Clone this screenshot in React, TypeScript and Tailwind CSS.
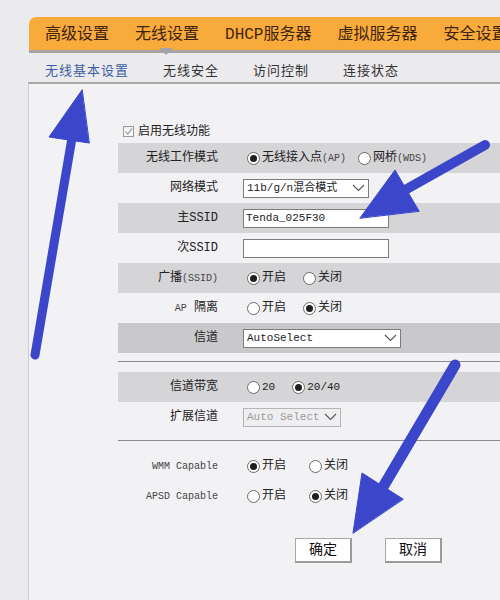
import { ReactNode } from "react";

const navItems = ["高级设置", "无线设置", "DHCP服务器", "虚拟服务器", "安全设置"];
const tabs = ["无线基本设置", "无线安全", "访问控制", "连接状态"];

const Radio = ({ checked, children }: { checked?: boolean; children: ReactNode }) => {
  return (
    <label className="flex items-center gap-[2px]">
      <span className="flex items-center justify-center w-[13px] h-[13px] rounded-full border border-[#6b6b6b] bg-white">
        {checked && <span className="w-[7px] h-[7px] rounded-full bg-[#1f1f1f]" />}
      </span>
      <span>{children}</span>
    </label>
  );
};

const Chevron = () => (
  <svg className="w-[13px] h-[8px]" viewBox="0 0 13 8" fill="none" stroke="#555" strokeWidth="1.1">
    <path d="M1 1 L6.5 6.5 L12 1" />
  </svg>
);

const Select = ({ value, width, disabled }: { value: string; width: string; disabled?: boolean }) => (
  <div
    className={`flex items-center justify-between h-[19px] px-[3px] text-[11px] border ${width} ${
      disabled ? "bg-[#efeef1] border-[#b5b5b5] text-[#9a9a9a]" : "bg-white border-[#7c7c7c] text-[#222]"
    }`}
  >
    <span>{value}</span>
    <Chevron />
  </div>
);

const Row = ({ label, bg, children }: { label: ReactNode; bg?: string; children: ReactNode }) => (
  <div className={`flex items-center h-[30px] ${bg ?? ""}`}>
    <div className="w-[100px] text-right text-[12px] text-[#222]">{label}</div>
    <div className="flex items-center pl-[25px]">{children}</div>
  </div>
);

const Small = ({ children }: { children: ReactNode }) => (
  <span className="text-[10px] text-[#444]">{children}</span>
);

const App = () => {
  return (
    <div className="relative w-[500px] h-[600px] overflow-hidden bg-[#ebeaed] pt-[17px] font-['Liberation_Mono','Noto_Sans_CJK_SC',monospace] text-[#222]">
      {/* top nav */}
      <div className="ml-[29px] h-[36px] bg-[#f8aa3a] rounded-tl-[7px] border-b-[3px] border-[#a4a4a4] flex items-center pt-[3px] pl-[16px] gap-[26px] text-[16px] text-[#3d2410] whitespace-nowrap">
        {navItems.map((item, i) => (
          <span key={item} className="relative leading-none">
            {item}
            {i === 1 && (
              <span className="absolute left-[24px] top-[21px] w-0 h-0 border-l-[7px] border-r-[7px] border-t-[7px] border-l-transparent border-r-transparent border-t-[#a4a4a4]" />
            )}
          </span>
        ))}
      </div>

      {/* sub tabs */}
      <div className="h-[29px] pt-[8px] pl-[45px] flex items-center gap-[34px] text-[13px] tracking-[1px] text-[#333]">
        {tabs.map((t, i) => (
          <span key={t} className={i === 0 ? "text-[#3d5ea6]" : ""}>
            {t}
          </span>
        ))}
      </div>

      {/* panel */}
      <div className="ml-[28px] h-[520px] bg-[#f2f1f4] border-t-2 border-l border-t-[#a9a9a9] border-l-[#cfcfcf] pt-[34px] pl-[89px]">
        <div className="flex items-center h-[25px] pl-[5px] gap-[4px] text-[12px] pt-[2px]">
          <span className="flex items-center justify-center w-[11px] h-[11px] border border-[#9a9a9a] bg-[#f7f7f7]">
            <svg className="w-[9px] h-[9px]" viewBox="0 0 9 9" fill="none" stroke="#8a8a8a" strokeWidth="1.1">
              <path d="M1.5 4.5 L3.8 7 L8 1.5" />
            </svg>
          </span>
          <span>启用无线功能</span>
        </div>

        <Row label="无线工作模式" bg="bg-[#d5d4d7]">
          <div className="flex items-center gap-[12px] text-[12px] ml-[4px]">
            <Radio checked>
              无线接入点<Small>(AP)</Small>
            </Radio>
            <Radio>
              网桥<Small>(WDS)</Small>
            </Radio>
          </div>
        </Row>
        <Row label="网络模式">
          <Select value="11b/g/n混合模式" width="w-[126px]" />
        </Row>
        <Row label="主SSID" bg="bg-[#d5d4d7]">
          <div className="w-[146px] h-[19px] bg-white border border-[#7c7c7c] px-[2px] text-[11px] leading-[17px]">Tenda_025F30</div>
        </Row>
        <Row label="次SSID">
          <div className="w-[146px] h-[19px] bg-white border border-[#7c7c7c]" />
        </Row>
        <Row label={<>广播<Small>(SSID)</Small></>} bg="bg-[#d5d4d7]">
          <div className="flex items-center gap-[17px] text-[12px] ml-[4px]">
            <Radio checked>开启</Radio>
            <Radio>关闭</Radio>
          </div>
        </Row>
        <Row label={<><Small>AP</Small> 隔离</>}>
          <div className="flex items-center gap-[17px] text-[12px] ml-[4px]">
            <Radio>开启</Radio>
            <Radio checked>关闭</Radio>
          </div>
        </Row>
        <Row label="信道" bg="bg-[#c9c8cb]">
          <Select value="AutoSelect" width="w-[158px]" />
        </Row>

        <div className="mt-[8px] mb-[10px] h-px bg-[#8a8a8a]" />

        <Row label="信道带宽" bg="bg-[#d5d4d7]">
          <div className="flex items-center gap-[17px] text-[11px] ml-[4px]">
            <Radio>20</Radio>
            <Radio checked>20/40</Radio>
          </div>
        </Row>
        <Row label="扩展信道">
          <Select value="Auto Select" width="w-[98px]" disabled />
        </Row>

        <div className="mt-[8px] mb-[10px] h-px bg-[#8a8a8a]" />

        <Row label={<Small>WMM Capable</Small>}>
          <div className="flex items-center gap-[23px] text-[12px] ml-[4px]">
            <Radio checked>开启</Radio>
            <Radio>关闭</Radio>
          </div>
        </Row>
        <Row label={<Small>APSD Capable</Small>}>
          <div className="flex items-center gap-[23px] text-[12px] ml-[4px]">
            <Radio>开启</Radio>
            <Radio checked>关闭</Radio>
          </div>
        </Row>

        <div className="flex gap-[33px] mt-[27px] ml-[177px]">
          <button className="w-[57px] h-[25px] bg-white border border-[#a8a8a8] border-r-2 border-b-2 border-r-[#9a9a9a] border-b-[#9a9a9a] text-[14px] text-[#111]">
            确定
          </button>
          <button className="w-[57px] h-[25px] bg-white border border-[#a8a8a8] border-r-2 border-b-2 border-r-[#9a9a9a] border-b-[#9a9a9a] text-[14px] text-[#111]">
            取消
          </button>
        </div>
      </div>

      {/* annotation arrows */}
      <svg className="absolute inset-0 w-[500px] h-[600px] pointer-events-none" viewBox="0 0 500 600">
        <g fill="#3b46cb" stroke="#3b46cb" strokeLinecap="round">
          <line x1="35" y1="355" x2="72" y2="138" strokeWidth="9" />
          <polygon points="82,90 49,137 89,143" strokeWidth="1" strokeLinejoin="round" />
          <line x1="485" y1="145" x2="405" y2="190" strokeWidth="10" />
          <polygon points="360,218 395,170 419,211" strokeWidth="1" strokeLinejoin="round" />
          <line x1="455" y1="365" x2="383" y2="487" strokeWidth="11" />
          <polygon points="353,533 362,473 403,499" strokeWidth="1" strokeLinejoin="round" />
        </g>
      </svg>
    </div>
  );
};

export default App;
